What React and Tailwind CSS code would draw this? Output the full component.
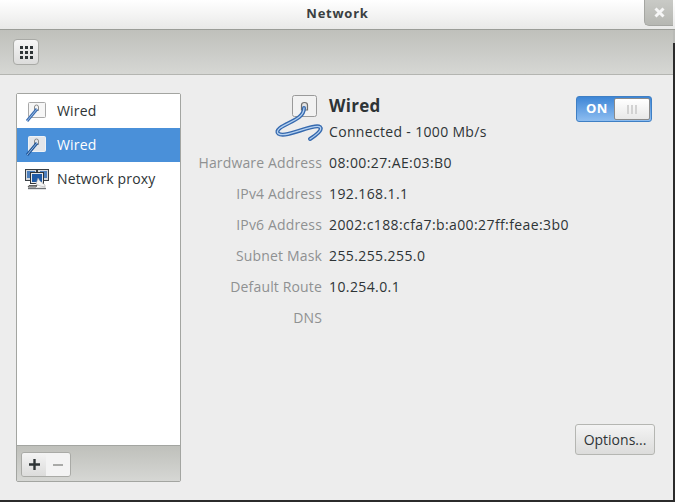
const font = { fontFamily: '"Open Sans", "Noto Sans", sans-serif' };

function WiredSmall({ selected }) {
  return (
    <svg width="24" height="24" viewBox="0 0 24 24" className="shrink-0">
      <rect x="3.5" y="3.5" width="17" height="15" rx="1" fill={selected ? '#e3e6ea' : '#f6f6f6'} stroke={selected ? '#eef2f6' : '#a8a8a8'} />
      <path d="M9.5 10 V8 Q9.5 6 11.5 6 Q13.5 6 13.5 8 V11.5 H9.5 Z" fill="none" stroke="#8a8a8a" strokeWidth="1" />
      <path d="M12 10 L2 22" stroke={selected ? '#1f5598' : '#3a6cb0'} strokeWidth="3" />
      <path d="M12 10 L2 22" stroke="#a6c5ea" strokeWidth="0.9" />
    </svg>
  );
}

function ProxyIcon() {
  return (
    <svg width="24" height="24" viewBox="0 0 24 24" className="shrink-0">
      <rect x="0.5" y="2.5" width="11" height="11" fill="#d5d9dd" stroke="#3a3f44" />
      <rect x="12.5" y="2.5" width="11" height="11" fill="#d5d9dd" stroke="#3a3f44" />
      <rect x="2" y="4" width="8" height="7" fill="#4d7fbd" />
      <rect x="15" y="4" width="7" height="7" fill="#4d7fbd" />
      <rect x="5.5" y="5.5" width="13" height="11" fill="#e6e8ea" stroke="#2e3338" />
      <rect x="7" y="7" width="10" height="8" fill="#1f5aa6" />
      <path d="M11 17 L13 11 L15 14 L20 18 L20 20 L15 19 Z" fill="#f4f4f4" stroke="#999" strokeWidth="0.5" />
      <path d="M4 18.5 H12 L11 20 H3 Z" fill="#bbb" stroke="#444" strokeWidth="0.8" />
      <path d="M3 21.5 H21" stroke="#6d7175" strokeWidth="1.4" />
    </svg>
  );
}

function WiredLarge() {
  const cable = 'M30 14 C30 25 14 28 6 34 C0 39 5 42 14 40 C24 38 42 30 46 33 C49 36 42 41 36 45';
  return (
    <svg width="58" height="52" viewBox="0 0 58 52" className="shrink-0">
      <rect x="18.5" y="1.5" width="24" height="21" rx="2" fill="#f2f2f2" stroke="#9a9a9a" />
      <path d="M27.5 16 V11 Q27.5 8.5 30.5 8.5 Q33.5 8.5 33.5 11 V16 Z" fill="#e4e4e4" stroke="#6e6e6e" strokeWidth="1.2" />
      <path d={cable} fill="none" stroke="#3569ae" strokeWidth="4" strokeLinecap="round" />
      <path d={cable} fill="none" stroke="#b4d0f0" strokeWidth="1.3" strokeLinecap="round" />
    </svg>
  );
}

const rows = [
  ['Hardware Address', '08:00:27:AE:03:B0'],
  ['IPv4 Address', '192.168.1.1'],
  ['IPv6 Address', '2002:c188:cfa7:b:a00:27ff:feae:3b0'],
  ['Subnet Mask', '255.255.255.0'],
  ['Default Route', '10.254.0.1'],
  ['DNS', ''],
];

export default function App() {
  return (
    <div className="w-[675px] h-[502px] flex flex-col overflow-hidden bg-[#2b2b2b] text-[14px] text-[#2e3436]" style={font}>
      <div className="flex-1 flex flex-col mr-[2px] mb-[2px] bg-[#ededed] min-h-0">
        <div className="h-[30px] shrink-0 flex justify-between bg-gradient-to-b from-white to-[#e9e9e8] border-b border-[#9b9d98] -mr-[2px] relative">
          <div className="flex-1 text-center font-bold text-[13px] leading-[26px] tracking-[0.75px] text-[#3a3f41]">Network</div>
          <div className="absolute right-[2px] top-0 w-[29px] h-[26px] rounded-bl-[5px] bg-gradient-to-b from-[#c9cac6] to-[#b6b7b2] border-l border-b border-[#a5a6a2] flex items-center justify-center">
            <svg width="11" height="11" viewBox="0 0 11 11"><path d="M1.5 1.5 L9.5 9.5 M9.5 1.5 L1.5 9.5" stroke="#f6f6f6" strokeWidth="3" /></svg>
          </div>
        </div>

        <div className="h-[45px] shrink-0 flex items-center pl-[13px] bg-gradient-to-b from-[#bfc0bb] to-[#d6d7d4] border-b border-[#b4b5b1] relative">
          <span className="absolute top-0 right-[-2px] w-[2px] h-[13px] bg-[#b9bab6]" />
          <div className="w-[26px] h-[26px] rounded-[4px] border border-[#a9aaa6] bg-gradient-to-b from-[#f6f6f6] to-[#dcdcdb] grid grid-cols-[3px_3px_3px] gap-[2px] justify-center content-center">
            {Array.from({ length: 9 }).map((_, i) => (
              <span key={i} className="w-[3px] h-[3px] bg-[#2e3436]" />
            ))}
          </div>
        </div>

        <div className="flex-1 flex min-h-0 pl-[16px] pt-[18px] pb-[18px]">
          <div className="w-[165px] flex flex-col border border-[#a3a5a1] rounded-[2px] shrink-0">
            <div className="flex-1 bg-white tracking-[0.15px]">
              <div className="h-[34px] flex items-center pl-[8px] gap-[8px]">
                <WiredSmall />
                <span className="-mt-[2px]">Wired</span>
              </div>
              <div className="h-[34px] flex items-center pl-[8px] gap-[8px] bg-[#4a90d9] text-white">
                <WiredSmall selected />
                <span className="-mt-[2px]">Wired</span>
              </div>
              <div className="h-[34px] flex items-center pl-[8px] gap-[8px]">
                <ProxyIcon />
                <span className="-mt-[2px]">Network proxy</span>
              </div>
            </div>
            <div className="h-[36px] shrink-0 border-t border-[#a3a5a1] bg-gradient-to-b from-[#bfc0bb] to-[#d6d7d4] pl-[4px] pt-[6px]">
              <div className="w-[50px] h-[25px] flex rounded-[3px] border border-[#a9aaa6] overflow-hidden">
                <div className="w-[24px] bg-gradient-to-b from-[#f4f4f4] to-[#dcdcdb] flex items-center justify-center">
                  <svg width="11" height="11" viewBox="0 0 11 11"><path d="M5.5 0 V11 M0 5.5 H11" stroke="#2e3436" strokeWidth="2.4" /></svg>
                </div>
                <div className="flex-1 bg-[#f3f3f3] flex items-center justify-center">
                  <span className="w-[10px] h-[2px] bg-[#a9aaa8]" />
                </div>
              </div>
            </div>
          </div>

          <div className="flex-1 flex flex-col min-w-0 pr-[21px]">
            <div className="flex items-start justify-between h-[53px] pt-[3px]">
              <div className="flex ml-[93px] -mt-[2px]">
                <WiredLarge />
                <div className="flex flex-col pt-[2px] -ml-[3px]">
                  <span className="font-bold text-[17px] leading-[20px] tracking-[0.3px]">Wired</span>
                  <span className="text-[14px] leading-[18px] mt-[7px] tracking-[0.33px] whitespace-nowrap">Connected - 1000 Mb/s</span>
                </div>
              </div>
              <div className="w-[76px] h-[26px] rounded-[3px] border border-[#3f7fc4] bg-gradient-to-b from-[#3d86d6] to-[#8dbdf0] flex items-center justify-between pl-[9px] pr-[1px] py-[1px]">
                <span className="text-white font-bold text-[13px] tracking-[0.3px]">ON</span>
                <div className="w-[36px] h-full rounded-[2px] border border-[#8a8a8a] bg-gradient-to-b from-white to-[#e8e8e8] flex items-center justify-center gap-[2px]">
                  <span className="w-[2px] h-[9px] bg-[#d2d2d2]" />
                  <span className="w-[2px] h-[9px] bg-[#d2d2d2]" />
                  <span className="w-[2px] h-[9px] bg-[#d2d2d2]" />
                </div>
              </div>
            </div>

            <div className="flex flex-col pt-[1px]">
              {rows.map(([label, value]) => (
                <div key={label} className="h-[31px] flex items-center">
                  <span className="w-[141px] shrink-0 text-right text-[#8f9192] tracking-[0.15px]">{label}</span>
                  <span className="ml-[7px] whitespace-nowrap tracking-[0.4px]">{value}</span>
                </div>
              ))}
            </div>

            <div className="flex-1 flex items-end justify-end">
              <div className="w-[80px] h-[31px] mb-[27px] -mr-[3px] rounded-[3px] border border-[#b5b6b2] bg-gradient-to-b from-[#f4f4f4] to-[#dcdcdb] flex items-center justify-center">
                Options...
              </div>
            </div>
          </div>
        </div>
      </div>
    </div>
  );
}
